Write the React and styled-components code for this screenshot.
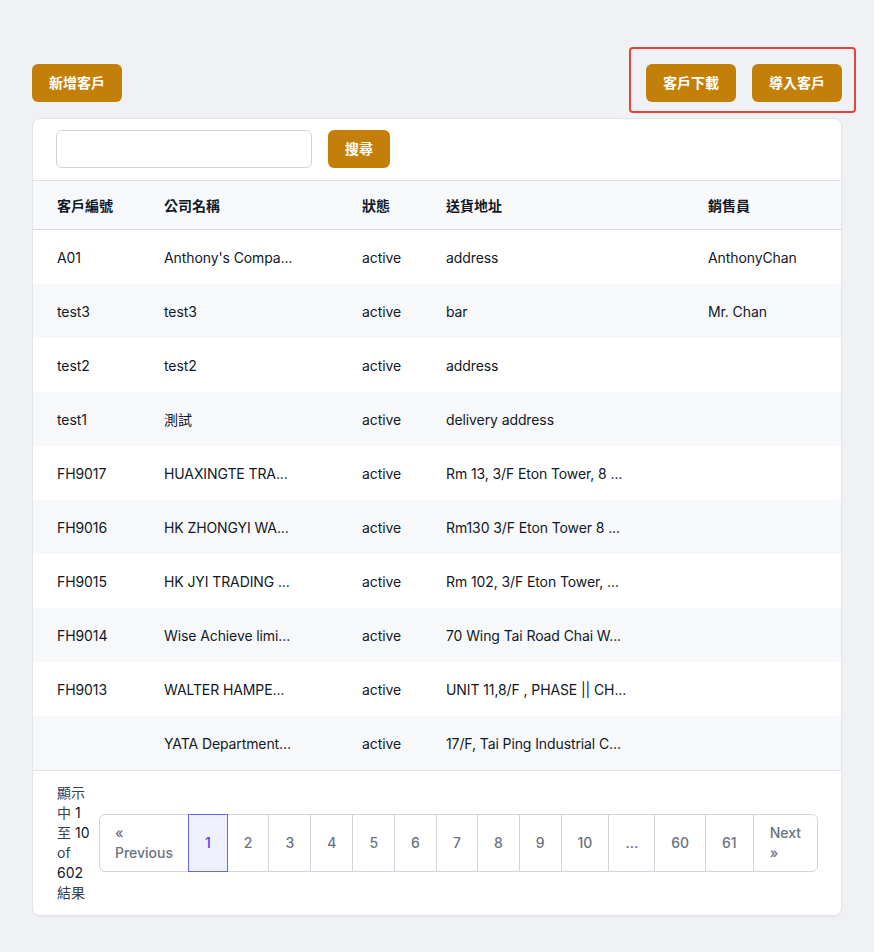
import React from "react";
import styled, { createGlobalStyle, css } from "styled-components";

const GlobalStyle = createGlobalStyle`
  * { box-sizing: border-box; }
  body {
    margin: 0;
    background: #f0f1f4;
    font-family: Inter, "Noto Sans CJK TC", sans-serif;
    font-size: 14px;
    color: #111827;
  }
`;

const Page = styled.div`
  padding: 64px 32px 37px;
`;

const Toolbar = styled.div`
  display: flex;
  justify-content: space-between;
  align-items: center;
  margin-bottom: 16px;
`;

const ButtonGroup = styled.div`
  position: relative;
  display: flex;
  gap: 16px;
  &::after {
    content: "";
    position: absolute;
    top: -17px;
    left: -17px;
    right: -14px;
    bottom: -11px;
    border: 2px solid #ea4335;
    border-radius: 4px;
    pointer-events: none;
  }
`;

const Button = styled.button`
  height: 38px;
  padding: 0 ${(p) => (p.$compact ? "17px" : "16px")};
  min-width: ${(p) => (p.$compact ? "62px" : "90px")};
  border: none;
  border-radius: 6px;
  background: #c47f09;
  color: #fff;
  font-family: inherit;
  font-size: 14px;
  font-weight: 600;
  line-height: 20px;
  cursor: pointer;
`;

const Card = styled.div`
  background: #fff;
  border: 1px solid #e3e5e9;
  border-radius: 8px;
  box-shadow: 0 1px 2px rgba(0, 0, 0, 0.04);
  overflow: hidden;
`;

const SearchBar = styled.div`
  display: flex;
  align-items: center;
  gap: 16px;
  padding: 11px 23px 12px;
`;

const SearchInput = styled.input`
  width: 256px;
  height: 38px;
  border: 1px solid #d1d5db;
  border-radius: 6px;
  padding: 0 12px;
  font-family: inherit;
  font-size: 14px;
  outline: none;
`;

const columns = "107px 198px 84px 262px 1fr";

const HeadRow = styled.div`
  display: grid;
  grid-template-columns: ${columns};
  height: 50px;
  align-items: center;
  background: #f8f9fa;
  border-top: 1px solid #e0e2e6;
  border-bottom: 1px solid #d5d8dd;
`;

const HeadCell = styled.div`
  padding-left: 24px;
  font-weight: 600;
  color: #111827;
  white-space: nowrap;
`;

const Row = styled.div`
  display: grid;
  grid-template-columns: ${columns};
  height: 54px;
  align-items: center;
  background: ${(p) => (p.$striped ? "#f7f8fa" : "#fff")};
`;

const Cell = styled.div`
  padding-left: 24px;
  color: #111827;
  white-space: nowrap;
  letter-spacing: -0.1px;
`;

const Footer = styled.div`
  display: flex;
  align-items: center;
  justify-content: space-between;
  padding: 12px 23px 12px 24px;
  border-top: 1px solid #e0e2e6;
`;

const Summary = styled.p`
  margin: 0;
  width: 38px;
  line-height: 20px;
  color: #374151;
`;

const Num = styled.span`
  color: #111827;
`;

const Pager = styled.nav`
  display: flex;
`;

const PageItem = styled.span`
  position: relative;
  display: flex;
  align-items: center;
  justify-content: center;
  padding: 8px ${(p) => (p.$first ? "15px" : "16px")};
  min-height: 58px;
  line-height: 20px;
  font-weight: 500;
  color: #6b7280;
  border: 1px solid #d1d5db;
  margin-left: -1px;
  background: #fff;
  ${(p) =>
    p.$first &&
    css`
      margin-left: 0;
      border-radius: 6px 0 0 6px;
    `}
  ${(p) =>
    p.$last &&
    css`
      border-radius: 0 6px 6px 0;
    `}
  ${(p) =>
    p.$active &&
    css`
      z-index: 1;
      background: #eef0fd;
      border-color: #6366f1;
      color: #4f46e5;
    `}
`;

const EdgeLabel = styled.span`
  text-align: left;
`;

const headers = ["客戶編號", "公司名稱", "狀態", "送貨地址", "銷售員"];

const customers = [
  ["A01", "Anthony's Compa...", "active", "address", "AnthonyChan"],
  ["test3", "test3", "active", "bar", "Mr. Chan"],
  ["test2", "test2", "active", "address", ""],
  ["test1", "測試", "active", "delivery address", ""],
  ["FH9017", "HUAXINGTE TRA...", "active", "Rm 13, 3/F Eton Tower, 8 ...", ""],
  ["FH9016", "HK ZHONGYI WA...", "active", "Rm130 3/F Eton Tower 8 ...", ""],
  ["FH9015", "HK JYI TRADING ...", "active", "Rm 102, 3/F Eton Tower, ...", ""],
  ["FH9014", "Wise Achieve limi...", "active", "70 Wing Tai Road Chai W...", ""],
  ["FH9013", "WALTER HAMPE...", "active", "UNIT 11,8/F , PHASE || CH...", ""],
  ["", "YATA Department...", "active", "17/F, Tai Ping Industrial C...", ""],
];

const pages = ["1", "2", "3", "4", "5", "6", "7", "8", "9", "10", "...", "60", "61"];

const App = () => {
  return (
    <Page>
      <GlobalStyle />
      <Toolbar>
        <Button>新增客戶</Button>
        <ButtonGroup>
          <Button>客戶下載</Button>
          <Button>導入客戶</Button>
        </ButtonGroup>
      </Toolbar>
      <Card>
        <SearchBar>
          <SearchInput type="text" />
          <Button $compact>搜尋</Button>
        </SearchBar>
        <HeadRow>
          {headers.map((h) => (
            <HeadCell key={h}>{h}</HeadCell>
          ))}
        </HeadRow>
        {customers.map((c, i) => (
          <Row key={i} $striped={i % 2 === 1}>
            {c.map((value, j) => (
              <Cell key={j}>{value}</Cell>
            ))}
          </Row>
        ))}
        <Footer>
          <Summary>
            顯示中 <Num>1</Num> 至 <Num>10</Num> of <Num>602</Num> 結果
          </Summary>
          <Pager>
            <PageItem $first>
              <EdgeLabel>
                «
                <br />
                Previous
              </EdgeLabel>
            </PageItem>
            {pages.map((p) => (
              <PageItem key={p} $active={p === "1"}>
                {p}
              </PageItem>
            ))}
            <PageItem $last>
              <EdgeLabel>
                Next
                <br />»
              </EdgeLabel>
            </PageItem>
          </Pager>
        </Footer>
      </Card>
    </Page>
  );
};

export default App;
